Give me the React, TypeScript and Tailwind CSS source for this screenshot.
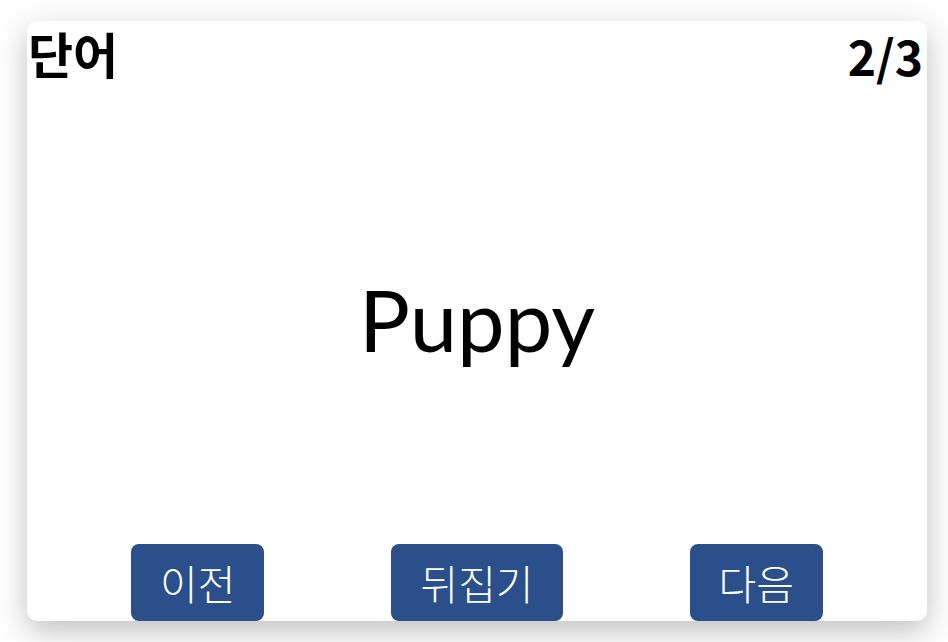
export default function App() {
  return (
    <div className="min-h-screen w-full bg-white pt-[21px] pl-[27px]">
      <div
        className="flex h-[600px] w-[900px] flex-col rounded-[10px] bg-white shadow-[0_10px_30px_rgba(0,0,0,0.25)]"
        style={{ fontFamily: '"Noto Sans CJK KR", "Noto Sans", sans-serif' }}
      >
        {/* 상단: 제목 + 진행도 */}
        <div className="flex items-start justify-between leading-none">
          <h1 className="pt-[7px] pl-[1px] text-[49px] font-bold text-black">단어</h1>
          <span className="pt-[10px] pr-[4px] text-[48px] font-bold text-black">2/3</span>
        </div>

        {/* 카드 본문 */}
        <div className="flex flex-1 items-center justify-center">
          <p
            className="pt-[16px] text-[85px] font-normal leading-none text-black"
            style={{ fontFamily: 'Lato, "Noto Sans", sans-serif' }}
          >
            Puppy
          </p>
        </div>

        {/* 버튼 */}
        <div className="grid grid-cols-3 place-items-center px-[31px]">
          <button className="h-[77px] rounded-lg bg-[#2b4f8a] px-[29px] text-[41px] font-light leading-none text-white">
            이전
          </button>
          <button className="h-[77px] rounded-lg bg-[#2b4f8a] px-[29px] text-[41px] font-light leading-none text-white">
            뒤집기
          </button>
          <button className="h-[77px] rounded-lg bg-[#2b4f8a] px-[29px] text-[41px] font-light leading-none text-white">
            다음
          </button>
        </div>
      </div>
    </div>
  );
}
